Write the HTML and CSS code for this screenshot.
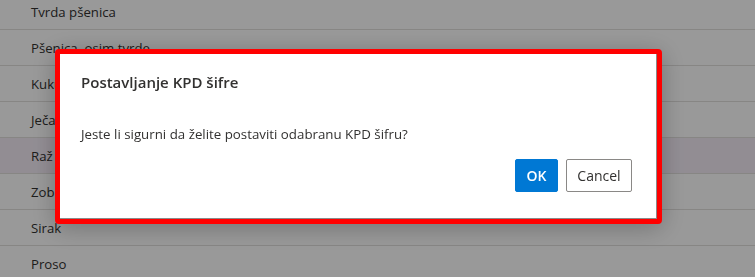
FILE: index.html
```html
<!DOCTYPE html>
<html lang="hr">
<head>
    <meta charset="UTF-8">
    <meta name="viewport" content="width=device-width, initial-scale=1.0">
    <title>Postavljanje KPD šifre</title>
    <link rel="stylesheet" href="styles.css">
</head>
<body>
    <!-- List of crops behind the dialog -->
    <ul class="crop-list">
        <li class="crop-row">Tvrda pšenica</li>
        <li class="crop-row">Pšenica, osim tvrde</li>
        <li class="crop-row">Kukuruz</li>
        <li class="crop-row">Ječam</li>
        <li class="crop-row selected">Raž</li>
        <li class="crop-row">Zob</li>
        <li class="crop-row">Sirak</li>
        <li class="crop-row">Proso</li>
    </ul>

    <!-- Modal overlay -->
    <div class="overlay">
        <div class="dialog">
            <h2 class="dialog-title">Postavljanje KPD šifre</h2>
            <p class="dialog-text">Jeste li sigurni da želite postaviti odabranu KPD šifru?</p>
            <div class="dialog-actions">
                <button class="btn btn-primary">OK</button>
                <button class="btn btn-default">Cancel</button>
            </div>
        </div>
    </div>
</body>
</html>
```

FILE: styles.css
```css
body {
    font-family: 'Open Sans', 'Noto Sans', sans-serif;
    background-color: #ffffff;
    color: #323130;
    margin: 0;
    padding: 0;
    height: 100vh;
    overflow: hidden;
}

.crop-list {
    list-style: none;
    margin: -6px 0 0 0;
    padding: 0;
}

.crop-row {
    height: 35px;
    line-height: 36px;
    padding-left: 31px;
    font-size: 13.2px;
    border-bottom: 1px solid #e1dfdd;
}

.crop-row.selected {
    background-color: #f4ecf6;
}

.overlay {
    position: fixed;
    top: 0;
    left: 0;
    right: 0;
    bottom: 0;
    background-color: rgba(0, 0, 0, 0.4);
    display: flex;
    align-items: flex-start;
    padding: 49px 0 0 55px;
}

.dialog {
    width: 597px;
    height: 165px;
    box-sizing: content-box;
    background-color: #ffffff;
    border: 5px solid #ff0000;
    border-radius: 4px;
    box-shadow: inset -1px -1px 0 #8a8a8a, 0 4px 24px rgba(0, 0, 0, 0.25);
    padding: 0;
    display: flex;
    flex-direction: column;
}

.dialog-title {
    font-size: 15px;
    font-weight: 600;
    margin: 17px 0 0 21px;
    line-height: 22px;
}

.dialog-text {
    font-size: 13.3px;
    margin: 31px 0 0 21px;
    line-height: 20px;
}

.dialog-actions {
    display: flex;
    justify-content: flex-end;
    gap: 8px;
    margin: 15px 25px 0 0;
}

.btn {
    font-family: 'Open Sans', 'Noto Sans', sans-serif;
    font-size: 14px;
    height: 33px;
    border-radius: 2px;
    padding: 0;
    cursor: pointer;
}

.btn-primary {
    background-color: #0078d4;
    color: #ffffff;
    font-weight: 600;
    border: 1px solid #0078d4;
    width: 43px;
}

.btn-default {
    background-color: #ffffff;
    color: #323130;
    border: 1px solid #8a8886;
    width: 66px;
}
```
